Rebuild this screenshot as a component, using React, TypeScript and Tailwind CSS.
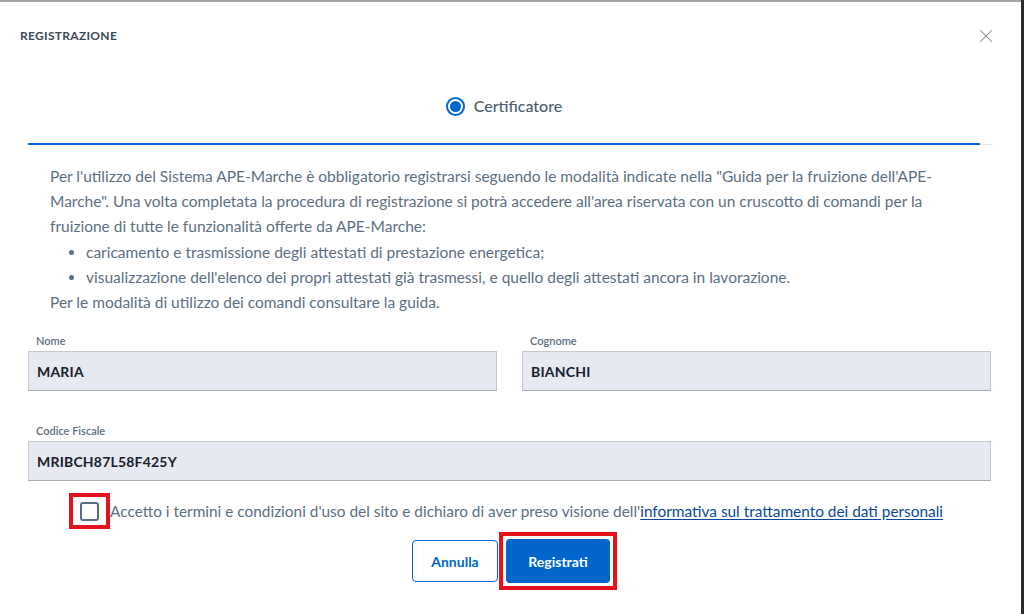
import { X } from 'lucide-react';

const font = "font-['Lato','Noto_Sans',sans-serif]";

// --- Filled input with small label ---
const Field = ({ label, value }: { label: string; value: string }) => (
  <div className="flex flex-col">
    <label className="text-[11px] font-semibold text-[#5c6f82] leading-none pl-2 mb-[5px]">{label}</label>
    <div className="h-[40px] bg-[#e6e9f2] border border-[#c5c7c9] border-b-[#a8aaad] flex items-center px-2">
      <span className="text-[14px] font-bold text-[#17202a] tracking-[0.2px]">{value}</span>
    </div>
  </div>
);

export default function App() {
  return (
    <div className={`w-screen h-screen bg-[#2b2b2b] overflow-hidden ${font}`}>
      <div className="w-[1021px] h-[614px] bg-white border-t-2 border-[#a3a3a3] relative">

        {/* Header */}
        <header className="flex items-center justify-between pl-5 pr-[24px] pt-[23px]">
          <h2 className="text-[12px] font-bold tracking-[0.3px] text-[#3b4a59] uppercase">Registrazione</h2>
          <X size={22} strokeWidth={1.1} className="text-[#7d8287]" />
        </header>

        {/* Radio tab */}
        <div className="ml-[28px] mr-[28px] mt-[47px] border-b border-[#e3e7ee]">
          <div className="w-[952px] border-b-2 border-[#0066cc] flex justify-center items-center gap-[9px] pb-[25px] -mb-px">
            <span className="w-[19px] h-[19px] rounded-full border-2 border-[#0066cc] flex items-center justify-center">
              <span className="w-[11px] h-[11px] rounded-full bg-[#0066cc]" />
            </span>
            <span className="text-[16px] text-[#4b5d6f] font-medium">Certificatore</span>
          </div>
        </div>

        {/* Description */}
        <div className="pl-[50px] pr-[70px] pt-[19px] text-[15.5px] leading-[25.2px] text-[#5c6f82]">
          <p>
            Per l'utilizzo del Sistema APE-Marche è obbligatorio registrarsi seguendo le modalità indicate nella "Guida per la fruizione dell'APE-Marche". Una volta completata la procedura di registrazione si potrà accedere all'area riservata con un cruscotto di comandi per la fruizione di tutte le funzionalità offerte da APE-Marche:
          </p>
          <ul className="list-disc pl-[36px]">
            <li>caricamento e trasmissione degli attestati di prestazione energetica;</li>
            <li>visualizzazione dell'elenco dei propri attestati già trasmessi, e quello degli attestati ancora in lavorazione.</li>
          </ul>
          <p>Per le modalità di utilizzo dei comandi consultare la guida.</p>
        </div>

        {/* Form */}
        <div className="pl-[28px] pr-[30px] pt-[20px] flex flex-col gap-[34px]">
          <div className="grid grid-cols-2 gap-[25px]">
            <Field label="Nome" value="MARIA" />
            <Field label="Cognome" value="BIANCHI" />
          </div>
          <Field label="Codice Fiscale" value="MRIBCH87L58F425Y" />
        </div>

        {/* Terms */}
        <div className="flex items-center pl-[69px] mt-[12px]">
          <div className="w-[41px] h-[36px] border-[4px] border-[#e4121c] flex items-center justify-center">
            <span className="w-[19px] h-[19px] rounded-[3px] border-2 border-[#5c6f82]" />
          </div>
          <span className="text-[15.4px] text-[#5c6f82]">
            Accetto i termini e condizioni d'uso del sito e dichiaro di aver preso visione dell'
            <a className="text-[#0b4a9a] underline underline-offset-2">informativa sul trattamento dei dati personali</a>
          </span>
        </div>

        {/* Buttons */}
        <div className="flex justify-center items-center gap-[1px] mt-[3px] pl-[8px]">
          <button className="w-[86px] h-[42px] border border-[#0066cc] rounded-[4px] text-[#0066cc] text-[14px] font-bold">Annulla</button>
          <div className="border-[4px] border-[#e4121c] p-[3px]">
            <button className="w-[104px] h-[44px] bg-[#0066cc] rounded-[4px] text-white text-[14px] font-bold">Registrati</button>
          </div>
        </div>

      </div>
    </div>
  );
}
